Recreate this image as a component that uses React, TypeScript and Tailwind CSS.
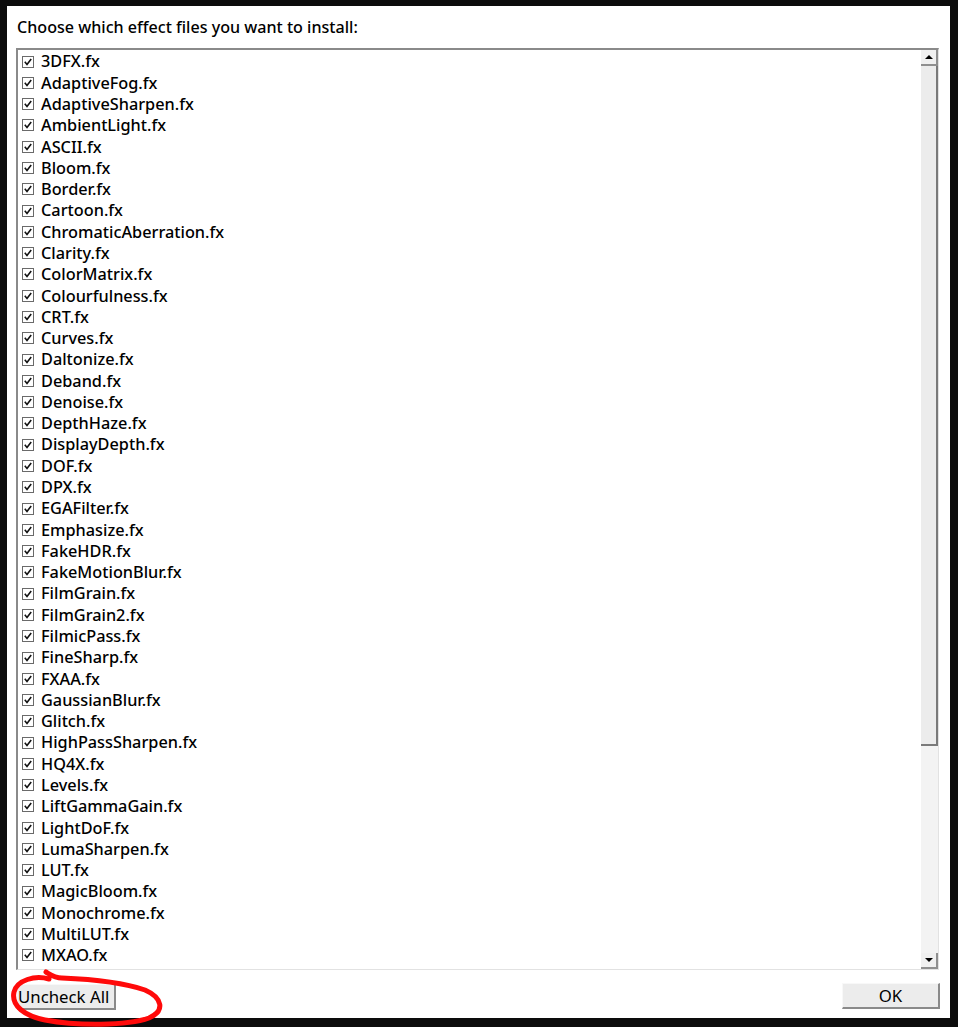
const effects = [
  "3DFX.fx",
  "AdaptiveFog.fx",
  "AdaptiveSharpen.fx",
  "AmbientLight.fx",
  "ASCII.fx",
  "Bloom.fx",
  "Border.fx",
  "Cartoon.fx",
  "ChromaticAberration.fx",
  "Clarity.fx",
  "ColorMatrix.fx",
  "Colourfulness.fx",
  "CRT.fx",
  "Curves.fx",
  "Daltonize.fx",
  "Deband.fx",
  "Denoise.fx",
  "DepthHaze.fx",
  "DisplayDepth.fx",
  "DOF.fx",
  "DPX.fx",
  "EGAFilter.fx",
  "Emphasize.fx",
  "FakeHDR.fx",
  "FakeMotionBlur.fx",
  "FilmGrain.fx",
  "FilmGrain2.fx",
  "FilmicPass.fx",
  "FineSharp.fx",
  "FXAA.fx",
  "GaussianBlur.fx",
  "Glitch.fx",
  "HighPassSharpen.fx",
  "HQ4X.fx",
  "Levels.fx",
  "LiftGammaGain.fx",
  "LightDoF.fx",
  "LumaSharpen.fx",
  "LUT.fx",
  "MagicBloom.fx",
  "Monochrome.fx",
  "MultiLUT.fx",
  "MXAO.fx",
];

function CheckBox() {
  return (
    <span className="flex h-[12px] w-[12px] shrink-0 items-center justify-center border border-[#6a6a6a] bg-white">
      <svg width="10" height="10" viewBox="0 0 10 10">
        <path d="M1.8 4.8 L4 7.4 L8.2 2" fill="none" stroke="#111" strokeWidth="1.6" />
      </svg>
    </span>
  );
}

export default function App() {
  return (
    <div className="h-[1027px] w-[958px] bg-[#0c0c0c] pb-[9px] pl-[7px] pr-[8px] pt-[6px] font-['Noto_Sans',sans-serif] font-medium text-black">
      <div className="relative flex h-full flex-col bg-white">
        <div className="h-[42px] pl-[10px] pt-[10px] text-[16.1px] leading-[22px]">
          Choose which effect files you want to install:
        </div>

        {/* list box */}
        <div className="ml-[9px] mr-[11px] flex h-[922px] border-l-2 border-t-2 border-b border-r border-l-[#8a8a8a] border-t-[#8a8a8a] border-b-[#e2e2e2] border-r-[#e2e2e2]">
          <div className="flex-1 overflow-hidden pt-[1px]">
            {effects.map((name) => (
              <div key={name} className="flex h-[21.29px] items-center gap-[7px] pl-[4px] text-[16.3px]">
                <CheckBox />
                <span>{name}</span>
              </div>
            ))}
          </div>

          {/* scrollbar */}
          <div className="flex w-[17px] flex-col bg-[#f0f0f0]">
            <div className="flex h-[16px] items-center justify-center border-b-2 border-r-2 border-b-[#8f8f8f] border-r-[#8f8f8f] bg-[#f0f0f0]">
              <span className="h-0 w-0 border-x-[4px] border-b-[4px] border-x-transparent border-b-black" />
            </div>
            <div className="h-[680px] border-b-2 border-r-2 border-b-[#7a7a7a] border-r-[#7a7a7a] bg-[#ececec]" />
            <div className="flex-1 bg-[#f3f3f3]" />
            <div className="flex h-[16px] items-center justify-center border-b-2 border-r-2 border-b-[#8f8f8f] border-r-[#8f8f8f] bg-[#f0f0f0]">
              <span className="h-0 w-0 border-x-[4px] border-t-[4px] border-x-transparent border-t-black" />
            </div>
          </div>
        </div>

        {/* buttons */}
        <div className="flex items-start justify-between pl-[10px] pr-[10px] pt-[14px]">
          <button className="h-[26px] w-[99px] border-b-2 border-r-2 border-l border-t border-b-[#8a8a8a] border-r-[#8a8a8a] border-l-[#f8f8f8] border-t-[#f8f8f8] bg-[#ececec] text-left text-[16.8px] font-normal leading-[22px]">
            Uncheck All
          </button>
          <button className="-mt-[1px] h-[26px] w-[98px] border-b-2 border-r-2 border-l border-t border-b-[#8a8a8a] border-r-[#8a8a8a] border-l-[#f8f8f8] border-t-[#f8f8f8] bg-[#ececec] text-[16.8px] font-normal leading-[22px]">
            OK
          </button>
        </div>

        {/* red annotation */}
        <svg className="pointer-events-none absolute left-0 top-[960px]" width="170" height="65" viewBox="0 0 170 65">
          <path
            d="M42 13 C28 9 10 14 7 26 C4 40 18 50 38 54 C70 60 120 60 142 52 C158 45 156 32 138 24 C112 15 80 13 55 12 C48 12 44 9 39 6"
            fill="none"
            stroke="#ff0a0a"
            strokeWidth="5"
            strokeLinecap="round"
          />
        </svg>
      </div>
    </div>
  );
}
